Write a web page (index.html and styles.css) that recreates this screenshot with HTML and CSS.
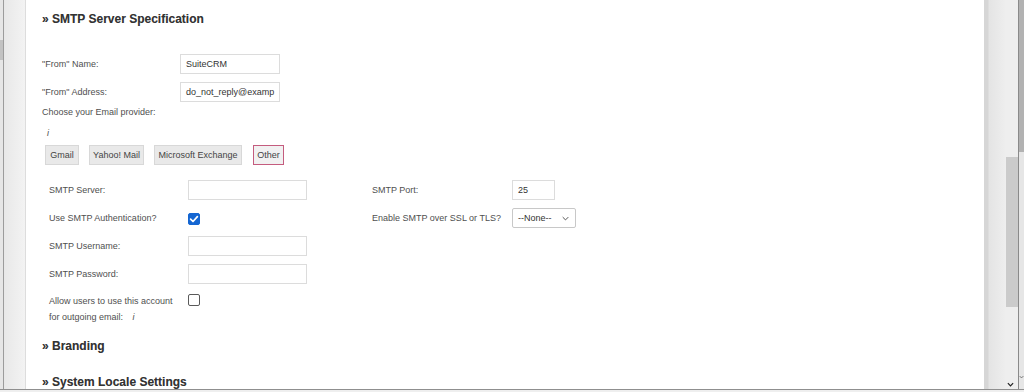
FILE: index.html
```html
<!DOCTYPE html>
<html>
<head>
<meta charset="utf-8">
<link rel="stylesheet" href="styles.css">
</head>
<body>
<div class="frame">
  <div class="left-strip"></div>
  <main class="content">
    <h4 class="section-title">» SMTP Server Specification</h4>
    <div class="from-grid">
      <label class="lbl">"From" Name:</label>
      <div class="input w-from">SuiteCRM</div>
      <label class="lbl">"From" Address:</label>
      <div class="input w-from tight">do_not_reply@examp</div>
    </div>
    <div class="lbl choose">Choose your Email provider:</div>
    <div class="lbl info">i</div>
    <div class="providers">
      <button class="prov p-gmail">Gmail</button>
      <button class="prov p-yahoo">Yahoo! Mail</button>
      <button class="prov p-ms">Microsoft Exchange</button>
      <button class="prov p-other active">Other</button>
    </div>
    <div class="smtp-grid">
      <label class="lbl">SMTP Server:</label>
      <div class="input w-smtp"></div>
      <label class="lbl">SMTP Port:</label>
      <div class="input w-port">25</div>

      <label class="lbl">Use SMTP Authentication?</label>
      <div><span class="cb checked"><svg viewBox="0 0 12 12" width="12" height="12"><path d="M2.6 6.2 L5 8.5 L9.4 3.6" fill="none" stroke="#fff" stroke-width="1.7" stroke-linecap="round" stroke-linejoin="round"/></svg></span></div>
      <label class="lbl">Enable SMTP over SSL or TLS?</label>
      <div class="select"><span>--None--</span><svg viewBox="0 0 10 6" width="7" height="5"><path d="M1 1 L5 5 L9 1" fill="none" stroke="#444" stroke-width="1.3"/></svg></div>

      <label class="lbl">SMTP Username:</label>
      <div class="input w-smtp"></div>
      <div></div><div></div>

      <label class="lbl">SMTP Password:</label>
      <div class="input w-smtp"></div>
      <div></div><div></div>

      <label class="lbl two-line">Allow users to use this account<br>for outgoing email: <i class="info-i">i</i></label>
      <div class="cb-wrap"><span class="cb"></span></div>
      <div></div><div></div>
    </div>
    <h4 class="section-title branding">» Branding</h4>
    <h4 class="section-title locale">» System Locale Settings</h4>
  </main>
  <div class="right-strip">
    <div class="gutter"></div>
    <div class="track">
      <div class="thumb"></div>
      <svg class="chev" viewBox="0 0 8 5" width="7" height="5"><path d="M1 1 L4 4 L7 1" fill="none" stroke="#222" stroke-width="1.4"/></svg>
    </div>
    <div class="vline"></div>
    <div class="outer">
      <div class="outer-top"></div>
      <svg class="chev2" viewBox="0 0 8 5" width="5" height="4"><path d="M1 1 L4 4 L7 1" fill="none" stroke="#555" stroke-width="1.2"/></svg>
    </div>
  </div>
</div>
<div class="bottom-line"></div>
</body>
</html>
```
FILE: styles.css
```css
* { box-sizing: border-box; }
html, body {
  margin: 0;
  padding: 0;
  width: 1024px;
  height: 392px;
  overflow: hidden;
  background: #efefef;
  font-family: "Liberation Sans", Arial, sans-serif;
}
.frame {
  display: flex;
  height: 390px;
  border-bottom: 1px solid #8f8f8f;
}
.left-strip {
  width: 26px;
  flex: none;
  background:
    linear-gradient(#c2c2c2, #c2c2c2) no-repeat 0 40px / 3px 20px,
    linear-gradient(to right, #e6e6e6 0, #e6e6e6 3px, #9c9c9c 3px, #9c9c9c 4px, #e8e8e8 4px, #f3f3f3 25px, #dddddd 25px, #dddddd 26px);
}
.content {
  flex: 1;
  background: #fff;
  padding: 12px 0 0 16px;
  color: #444;
  overflow: hidden;
}
.section-title {
  margin: 0;
  font-size: 12px;
  line-height: 14px;
  font-weight: bold;
  color: #333;
  text-shadow: 0 0 0.5px rgba(0,0,0,0.3);
}
.lbl {
  font-size: 9px;
  line-height: 12px;
  color: #4f4f4f;
}
.from-grid {
  display: grid;
  grid-template-columns: 138px auto;
  row-gap: 8px;
  align-items: center;
  margin-top: 28px;
}
.input {
  height: 20px;
  border: 1px solid #dcdcdc;
  background: #fff;
  font-size: 9px;
  line-height: 18px;
  padding: 0 5px;
  color: #333;
  white-space: nowrap;
  overflow: hidden;
}
.input.tight { padding: 0 1px 0 5px; }
.w-from { width: 100px; }
.w-smtp { width: 119px; }
.w-port { width: 43px; }
.choose { margin-top: 4px; }
.info { margin-top: 9px; margin-left: 5px; font-style: italic; }
.info-i { margin-left: 7px; }
.providers {
  display: flex;
  gap: 10px;
  margin-top: 6px;
  margin-left: 3px;
}
.prov {
  height: 20px;
  padding: 0;
  text-align: center;
  font-family: "Liberation Sans", Arial, sans-serif;
  font-size: 9px;
  color: #444;
  background: #e9e9e9;
  border: 1px solid #d8d8d8;
  border-radius: 0;
}
.p-gmail { width: 34px; }
.p-yahoo { width: 55px; }
.p-ms { width: 88px; }
.p-other { width: 31px; margin-left: 1px; }
.prov.active {
  background: #f1f1f1;
  border-color: #c45c7e;
}
.smtp-grid {
  display: grid;
  grid-template-columns: 139px 184px 140px auto;
  grid-template-rows: 20px 20px 20px 20px 32px;
  row-gap: 8px;
  align-items: center;
  margin-top: 15px;
  margin-left: 7px;
}
.smtp-grid > .two-line {
  line-height: 16px;
  align-self: start;
  margin-top: 1px;
}
.smtp-grid > .cb-wrap { align-self: start; padding-top: 2px; }
.cb {
  display: block;
  width: 12px;
  height: 12px;
  border: 1px solid #5a5a5a;
  border-radius: 2px;
  background: #fff;
}
.cb.checked {
  background: #1466d2;
  border-color: #1466d2;
  margin-top: 1px;
}
.cb.checked svg { display: block; margin: -1px; }
.select {
  width: 64px;
  height: 20px;
  border: 1px solid #c8c8c8;
  border-radius: 2px;
  display: flex;
  align-items: center;
  justify-content: space-between;
  padding: 0 6px 0 5px;
  font-size: 9px;
  color: #333;
}
.branding { margin-top: 15px; }
.locale { margin-top: 22px; }
.right-strip {
  width: 40px;
  flex: none;
  display: flex;
}
.gutter {
  width: 22px;
  background: linear-gradient(to right, #d6d6d6 0, #d6d6d6 4px, #e4e4e4 5px, #eeeeee 22px);
}
.track {
  width: 12px;
  background: #eeeeee;
  display: flex;
  flex-direction: column;
  align-items: center;
  padding-top: 157px;
}
.thumb {
  width: 12px;
  height: 150px;
  background: #cbcbcb;
}
.chev { margin-top: auto; margin-bottom: 2px; margin-left: -3px; }
.vline { width: 1px; background: #8a8a8a; }
.outer {
  width: 5px;
  background: #e6e6e6;
  display: flex;
  flex-direction: column;
}
.outer-top { height: 152px; background: #b2b2b2; }
.chev2 { margin-top: auto; margin-bottom: 10px; }
.bottom-line { height: 1px; background: #eeeeee; }
```
